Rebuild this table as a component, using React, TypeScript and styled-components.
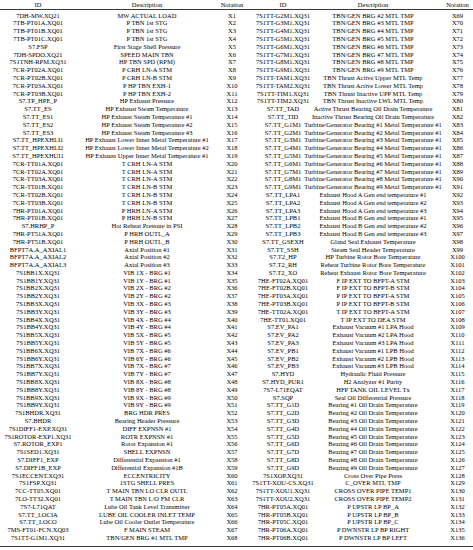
import React from "react";
import styled, { createGlobalStyle } from "styled-components";

const Global = createGlobalStyle`
  html, body { margin: 0; padding: 0; background: #ffffff; }
  body { font-family: "Liberation Serif", "Times New Roman", serif; }
`;

const COLS = "76px 142px 28px 74px 106px 47px";

const Table = styled.div`
  width: 473px;
  display: flex;
  flex-direction: column;
  color: #000000;
  font-family: "Liberation Serif", "Times New Roman", serif;
  font-size: 6.5px;
`;

const HeadRow = styled.div`
  display: grid;
  grid-template-columns: ${COLS};
  height: 9px;
  border-bottom: 1px solid #3a3a3a;
  align-items: center;
`;

const Body = styled.div`
  display: flex;
  flex-direction: column;
  padding: 1.6px 0 4.3px;
  border-bottom: 1px solid #3a3a3a;
`;

const Row = styled.div`
  display: grid;
  grid-template-columns: ${COLS};
  height: 7.81px;
  align-items: center;
`;

const Cell = styled.div<{ $pl?: number }>`
  display: flex;
  justify-content: center;
  white-space: nowrap;
  line-height: 7.81px;
  padding-left: ${(p) => p.$pl ?? 0}px;
  min-width: 0;
`;

type Item = [string, string];

const left: Item[] = [
  ["7DH-MW.XQ21", "MW ACTUAL LOAD"],
  ["7TB-PT01A.XQ01", "P TBN 1st STG"],
  ["7TB-PT01B.XQ01", "P TBN 1st STG"],
  ["7TB-PT01C.XQ01", "P TBN 1st STG"],
  ["S7.FSP", "First Stage Shell Pressure"],
  ["7DH-SPDO.XQ21", "SPEED MAIN TBN"],
  ["7S1TNH-RPM.XQ31", "HP TBN SPD (RPM)"],
  ["7CR-PT02A.XQ01", "P CRH LN-A STM"],
  ["7CR-PT02B.XQ01", "P CRH LN-B STM"],
  ["7CR-PT03A.XQ01", "P HP TBN EXH-1"],
  ["7CR-PT03B.XQ01", "P HP TBN EXH-2"],
  ["S7.TP_HPE_P", "HP Exhaust Pressure"],
  ["S7.TT_ES", "HP Exhaust Steam Temperature"],
  ["S7.TT_ES1", "HP Exhaust Steam Temperature #1"],
  ["S7.TT_ES2", "HP Exhaust Steam Temperature #2"],
  ["S7.TT_ES3", "HP Exhaust Steam Temperature #3"],
  ["S7.TT_HPEXHLI1", "HP Exhaust Lower Inner Metal Temperature #1"],
  ["S7.TT_HPEXHLI2", "HP Exhaust Lower Inner Metal Temperature #2"],
  ["S7.TT_HPEXHUI1", "HP Exhaust Upper Inner Metal Temperature #1"],
  ["7CR-TT01A.XQ01", "T CRH LN-A STM"],
  ["7CR-TT02A.XQ01", "T CRH LN-A STM"],
  ["7CR-TT03A.XQ01", "T CRH LN-A STM"],
  ["7CR-TT01B.XQ01", "T CRH LN-B STM"],
  ["7CR-TT02B.XQ01", "T CRH LN-B STM"],
  ["7CR-TT03B.XQ01", "T CRH LN-B STM"],
  ["7HR-PT01A.XQ01", "P HRH LN-A STM"],
  ["7HR-PT01B.XQ01", "P HRH LN-B STM"],
  ["S7.HRHP_P", "Hot Reheat Pressure in PSI"],
  ["7HR-PT51A.XQ01", "P HRH OUTL_A"],
  ["7HR-PT51B.XQ01", "P HRH OUTL_B"],
  ["BFPT7A.A_AXIAL1", "Axial Position #1"],
  ["BFPT7A.A_AXIAL2", "Axial Position #2"],
  ["BFPT7A.A_AXIAL3", "Axial Position #3"],
  ["7S1BB1X.XQ31", "VIB 1X - BRG #1"],
  ["7S1BB1Y.XQ31", "VIB 1Y - BRG #1"],
  ["7S1BB2X.XQ31", "VIB 2X - BRG #2"],
  ["7S1BB2Y.XQ31", "VIB 2Y - BRG #2"],
  ["7S1BB3X.XQ31", "VIB 3X - BRG #3"],
  ["7S1BB3Y.XQ31", "VIB 3Y - BRG #3"],
  ["7S1BB4X.XQ31", "VIB 4X - BRG #4"],
  ["7S1BB4Y.XQ31", "VIB 4Y - BRG #4"],
  ["7S1BB5X.XQ31", "VIB 5X - BRG #5"],
  ["7S1BB5Y.XQ31", "VIB 5Y - BRG #5"],
  ["7S1BB6X.XQ31", "VIB 7X - BRG #6"],
  ["7S1BB6Y.XQ31", "VIB 6Y - BRG #6"],
  ["7S1BB7X.XQ31", "VIB 7X - BRG #7"],
  ["7S1BB7Y.XQ31", "VIB 7Y - BRG #7"],
  ["7S1BB8X.XQ31", "VIB 8X - BRG #8"],
  ["7S1BB8Y.XQ31", "VIB 8Y - BRG #8"],
  ["7S1BB9X.XQ31", "VIB 9X - BRG #9"],
  ["7S1BB9Y.XQ31", "VIB 9Y - BRG #9"],
  ["7S1BHDR.XQ31", "BRG HDR PRES"],
  ["S7.BHDR", "Bearing Header Pressure"],
  ["7S1DIFF1-EXP.XQ31", "DIFF EXPNSN #1"],
  ["7S1ROTOR-EXP1.XQ31", "ROTR EXPNSN #1"],
  ["S7.ROTOR_EXP1", "Rotor Expansion #1"],
  ["7S1SED1.XQ31", "SHELL EXPNSN"],
  ["S7.DIFF1_EXP", "Differential Expansion #1"],
  ["S7.DIFF1B_EXP", "Differential Expansion #1B"],
  ["7S1ECCENT.XQ31", "ECCENTRICITY"],
  ["7S1FSP.XQ31", "1STG SHELL PRES"],
  ["7CC-TT05.XQ01", "T MAIN TBN LO CLR OUTL"],
  ["7LO-TT32.XQ01", "T MAIN TBN L/O FM CLR"],
  ["7S7-L71QAT", "Lube Oil Tank Level Transmitter"],
  ["S7.TT_LOCIA", "LUBE OIL COOLER INLET TEMP"],
  ["S7.TT_LOCO", "Lube Oil Cooler Outlet Temperature"],
  ["7MS-FT01-FCN.XQ03", "F MAIN STEAM"],
  ["7S1TT-G1M1.XQ31", "TBN/GEN BRG #1 MTL TMP"],
];

const right: Item[] = [
  ...[2, 3, 4, 5, 6, 7, 8, 9].map(
    (n): Item => [`7S1TT-G${n}M1.XQ31`, `TBN/GEN BRG #${n} MTL TMP`]
  ),
  ["7S1TT-TAM1.XQ31", "TBN Thrust Active Upper MTL Temp"],
  ["7S1TT-TAM2.XQ31", "TBN Thrust Active Lower MTL Temp"],
  ["7S1TT-TIM1.XQ31", "TBN Thrust Inactive UPP MTL Temp"],
  ["7S1TT-TIM2.XQ31", "TBN Thrust Inactive LWL MTL Temp"],
  ["S7.TT_TAD", "Active Thrust Bearing Oil Drain Temperature"],
  ["S7.TT_TID", "Inactive Thrust Bearing Oil Drain Temperature"],
  ...[1, 2, 3, 4, 5, 6, 7, 8, 9].map(
    (n): Item => [`S7.TT_G${n}M1`, `Turbine/Generator Bearing #${n} Metal Temperature #1`]
  ),
  ["S7.TT_LPA1", "Exhaust Hood A Gen end temperature #1"],
  ["S7.TT_LPA2", "Exhaust Hood A Gen end temperature #2"],
  ["S7.TT_LPA3", "Exhaust Hood A Gen end temperature #3"],
  ["S7.TT_LPB1", "Exhaust Hood B Gen end temperature #1"],
  ["S7.TT_LPB2", "Exhaust Hood B Gen end temperature #2"],
  ["S7.TT_LPB3", "Exhaust Hood B Gen end temperature #3"],
  ["S7.TT_GSEXH", "Gland Seal Exhaust Temperature"],
  ["S7.TT_SSH", "Steam Seal Header Temperature"],
  ["S7.T2_HP", "HP Turbine Rotor Bore Temperature"],
  ["S7.T2_RH", "Reheat Turbine Rotor Bore Temperature"],
  ["S7.T2_XO", "Reheat Exhaust Rotor Bore Temperature"],
  ["7HE-FT02A.XQ01", "F IP EXT TO BFPT-A STM"],
  ["7HE-FT02B.XQ01", "F IP EXT TO BFPT-B STM"],
  ["7HE-PT03A.XQ01", "P IP EXT TO BFPT-A STM"],
  ["7HE-PT03B.XQ01", "P IP EXT TO BFPT-B STM"],
  ["7HE-TT02A.XQ01", "T IP EXT TO BFPT-A STM"],
  ["7HE-TT01.XQ01", "T IP EXT TO DEA STM"],
  ["S7.EV_PA1", "Exhaust Vacuum #1 LPA Hood"],
  ["S7.EV_PA2", "Exhaust Vacuum #2 LPA Hood"],
  ["S7.EV_PA3", "Exhaust Vacuum #3 LPA Hood"],
  ["S7.EV_PB1", "Exhaust Vacuum #1 LPB Hood"],
  ["S7.EV_PB2", "Exhaust Vacuum #2 LPB Hood"],
  ["S7.EV_PB3", "Exhaust Vacuum #3 LPB Hood"],
  ["S7.HYD", "Hydraulic Fluid Pressure"],
  ["S7.HYD_PUR1", "H2 Analyzer #1 Purity"],
  ["7S7-L71EQAT", "HFP TANK OIL LEVEL Tx"],
  ["S7.SQP", "Seal Oil Differential Pressure"],
  ...[1, 2, 3, 4, 5, 6, 7, 8, 9].map(
    (n): Item => [`S7.TT_G${n}D`, `Bearing #${n} Oil Drain Temperature`]
  ),
  ["7S1XOP.XQ31", "Cross Over Pipe Press"],
  ["7S1TT-XOU-CS.XQ31", "C_OVER MTL TMP"],
  ["7S1TT-XOU1.XQ31", "CROSS OVER PIPE TEMP1"],
  ["7S1TT-XOU2.XQ31", "CROSS OVER PIPE TEMP2"],
  ["7HR-PT05A.XQ01", "P UPSTR LP BP_A"],
  ["7HR-PT05B.XQ01", "P UPSTR LP BP_B"],
  ["7HR-PT05C.XQ01", "P UPSTR LP BP_C"],
  ["7HR-PT06A.XQ01", "P DWNSTR LP BP RIGHT"],
  ["7HR-PT06B.XQ01", "P DWNSTR LP BP LEFT"],
];

const RIGHT_NOTE_PAD = 16;

export default function App() {
  return (
    <>
      <Global />
      <Table>
        <HeadRow>
          <Cell>ID</Cell>
          <Cell>Description</Cell>
          <Cell>Notation</Cell>
          <Cell>ID</Cell>
          <Cell>Description</Cell>
          <Cell $pl={RIGHT_NOTE_PAD}>Notation</Cell>
        </HeadRow>
        <Body>
          {left.map((l, i) => {
            const r = right[i];
            return (
              <Row key={i}>
                <Cell>{l[0]}</Cell>
                <Cell>{l[1]}</Cell>
                <Cell>X{i + 1}</Cell>
                <Cell>{r ? r[0] : ""}</Cell>
                <Cell>{r ? r[1] : ""}</Cell>
                <Cell $pl={RIGHT_NOTE_PAD}>{r ? `X${i + 69}` : ""}</Cell>
              </Row>
            );
          })}
        </Body>
      </Table>
    </>
  );
}
